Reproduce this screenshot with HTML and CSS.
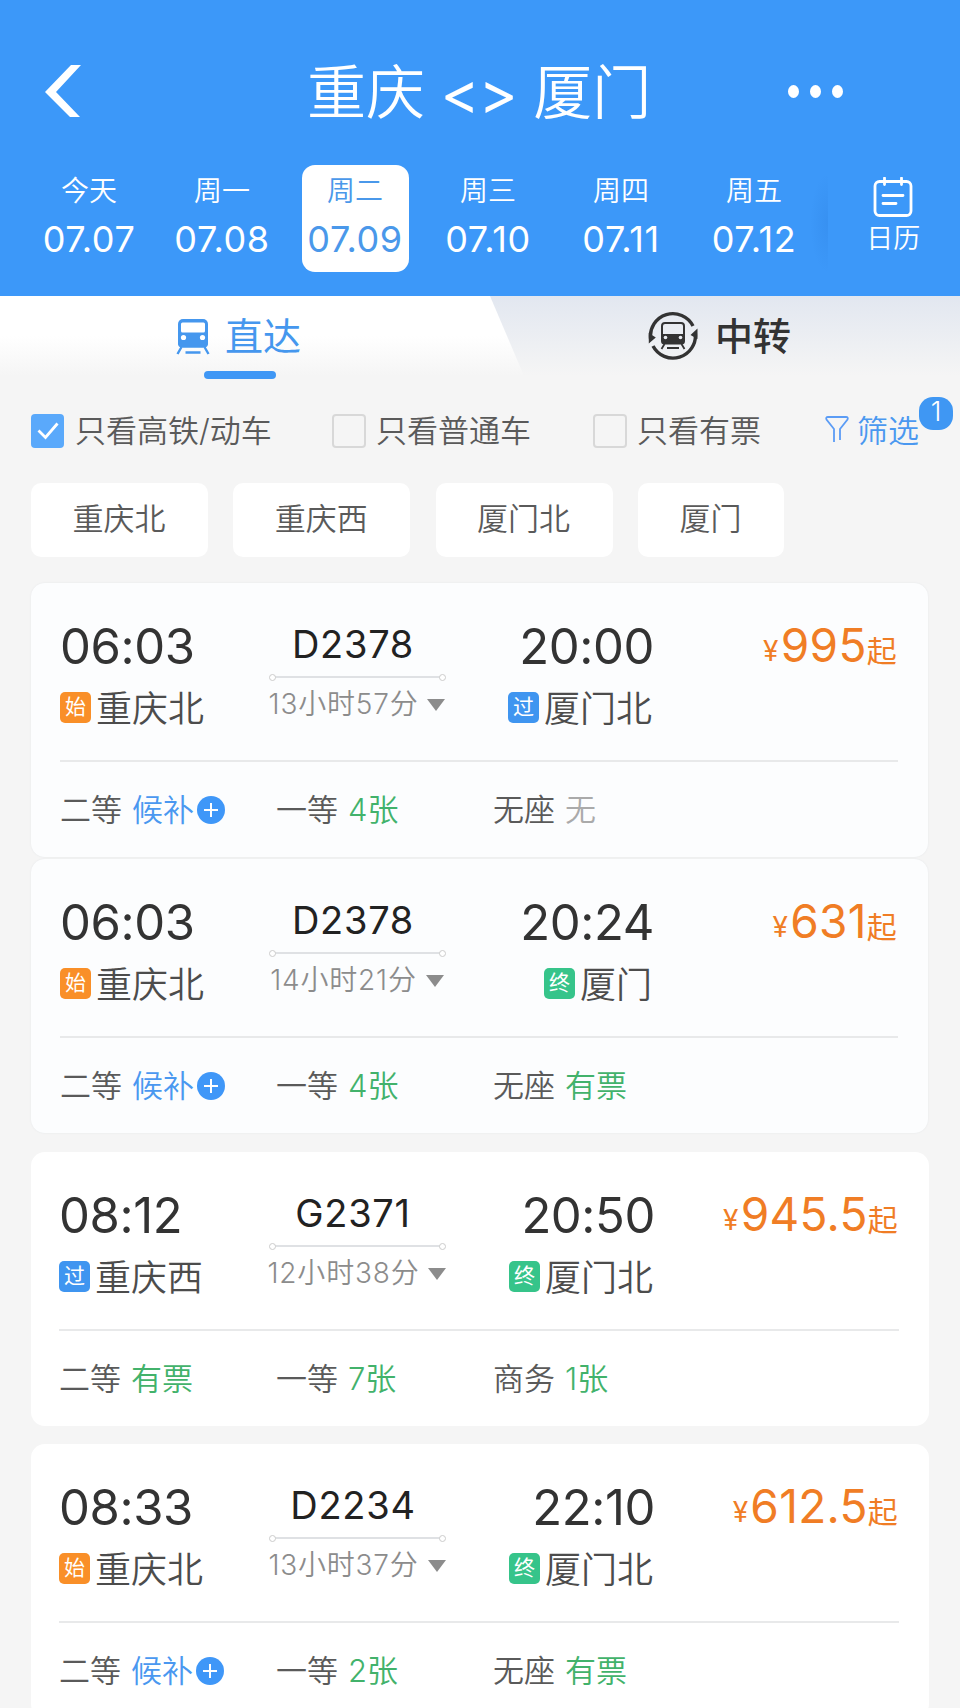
FILE: index.html
```html
<!DOCTYPE html>
<html lang="zh-CN">
<head>
  <meta charset="UTF-8">
  <meta name="viewport" content="width=device-width, initial-scale=1.0">
  <title>重庆 - 厦门</title>
  <link rel="stylesheet" href="styles.css">
</head>
<body>
  <header class="header">
    <div class="title-bar">
      <svg class="back" width="36" height="52" viewBox="0 0 36 52"><path d="M26 0h10L11 27l24 25H25L0 27z" fill="#fff"/></svg>
      <h1>重庆 <span class="arrows">&lt;&gt;</span> 厦门</h1>
      <div class="more"><i></i><i></i><i></i></div>
    </div>
    <nav class="dates">
      <div class="date"><span>今天</span><b>07.07</b></div>
      <div class="date"><span>周一</span><b>07.08</b></div>
      <div class="date active"><span>周二</span><b>07.09</b></div>
      <div class="date"><span>周三</span><b>07.10</b></div>
      <div class="date"><span>周四</span><b>07.11</b></div>
      <div class="date"><span>周五</span><b>07.12</b></div>
      <div class="calendar">
        <svg width="40" height="40" viewBox="0 0 40 40" fill="none" stroke="#fff" stroke-width="2.8" stroke-linecap="round">
          <rect x="2" y="4.500" width="36" height="34" rx="4.500"/>
          <path d="M11.500 1v6.500M28.500 1v6.500M10 18.500h20M10 26.500h13"/>
        </svg>
        <span>日历</span>
      </div>
    </nav>
  </header>

  <div class="tabs">
    <div class="tab tab-direct">
      <svg width="34" height="36" viewBox="0 0 34 36">
        <rect x="2" y="0" width="30" height="28.500" rx="5" fill="#4597ee"/>
        <path d="M2 12h30v12.500q0 4-4 4H6q-4 0-4-4z" fill="#4597ee"/>
        <rect x="5" y="3.500" width="24" height="10" rx="1.500" fill="#fff"/>
        <circle cx="7.500" cy="18.500" r="2.600" fill="#fff"/>
        <circle cx="26.500" cy="18.500" r="2.600" fill="#fff"/>
        <path d="M5.500 28l-4 7M28.500 28l4 7M9.500 33.500h15" stroke="#4597ee" stroke-width="2.400"/>
      </svg>
      <span>直达</span>
    </div>
    <div class="tab tab-transfer">
      <svg width="50" height="50" viewBox="0 0 50 50">
        <g fill="none" stroke="#333" stroke-width="3.400">
          <path d="M2.600 28A22.500 22.500 0 0 1 45 15"/>
          <path d="M47.300 22A22.500 22.500 0 0 1 5 35"/>
        </g>
        <path d="M.8 32.500V22l7 4.500zM49.500 17.500v10.500l-7-4z" fill="#333"/>
        <rect x="14" y="12" width="22" height="15" rx="3" fill="none" stroke="#333" stroke-width="2"/>
        <path d="M13 23h24v7q0 3.500-3.500 3.500h-17Q13 33.500 13 30z" fill="#333"/>
        <circle cx="17.500" cy="26.500" r="1.800" fill="#e9ecf1"/>
        <circle cx="32.500" cy="26.500" r="1.800" fill="#e9ecf1"/>
        <path d="M16.500 33l-3 5M33.500 33l3 5M19 37h12" stroke="#333" stroke-width="1.800"/>
      </svg>
      <span>中转</span>
    </div>
  </div>

  <div class="filters">
    <label class="check"><i class="box checked"><svg width="22" height="18" viewBox="0 0 22 18"><path d="M1.500 8.500l7 7L20.500 1.500" fill="none" stroke="#fff" stroke-width="2.800"/></svg></i><span>只看高铁/动车</span></label>
    <label class="check check-normal"><i class="box"></i><span>只看普通车</span></label>
    <label class="check check-ticket"><i class="box"></i><span>只看有票</span></label>
    <div class="filter">
      <svg width="24" height="27" viewBox="0 0 24 27" fill="none" stroke="#5b9cf5" stroke-width="1.800"><path d="M9 26V13L1.500 3.500Q.5 1 3 1h18q2.500 0 1.500 2.500L15 13v11"/></svg>
      <span>筛选</span>
      <em>1</em>
    </div>
  </div>

  <div class="stations">
    <span>重庆北</span>
    <span>重庆西</span>
    <span>厦门北</span>
    <span>厦门</span>
  </div>

  <main class="list">
    <section class="card group">
      <div class="trip">
        <div class="from"><time>06:03</time><p><i class="tag start">始</i><span>重庆北</span></p></div>
        <div class="train"><strong>D2378</strong><hr><p>13小时57分<i class="caret"></i></p></div>
        <div class="to"><time>20:00</time><p><i class="tag pass">过</i><span>厦门北</span></p></div>
        <div class="price"><small>¥</small>995<span>起</span></div>
      </div>
      <div class="seats">
        <div>二等 <span class="wait">候补</span><i class="plus"></i></div>
        <div>一等 <span class="ok">4张</span></div>
        <div>无座 <span class="none">无</span></div>
      </div>
    </section>

    <section class="card group">
      <div class="trip">
        <div class="from"><time>06:03</time><p><i class="tag start">始</i><span>重庆北</span></p></div>
        <div class="train"><strong>D2378</strong><hr><p>14小时21分<i class="caret"></i></p></div>
        <div class="to"><time>20:24</time><p><i class="tag end">终</i><span>厦门</span></p></div>
        <div class="price"><small>¥</small>631<span>起</span></div>
      </div>
      <div class="seats">
        <div>二等 <span class="wait">候补</span><i class="plus"></i></div>
        <div>一等 <span class="ok">4张</span></div>
        <div>无座 <span class="ok">有票</span></div>
      </div>
    </section>

    <section class="card">
      <div class="trip">
        <div class="from"><time>08:12</time><p><i class="tag pass">过</i><span>重庆西</span></p></div>
        <div class="train"><strong>G2371</strong><hr><p>12小时38分<i class="caret"></i></p></div>
        <div class="to"><time>20:50</time><p><i class="tag end">终</i><span>厦门北</span></p></div>
        <div class="price"><small>¥</small>945.5<span>起</span></div>
      </div>
      <div class="seats">
        <div>二等 <span class="ok">有票</span></div>
        <div>一等 <span class="ok">7张</span></div>
        <div>商务 <span class="ok">1张</span></div>
      </div>
    </section>

    <section class="card">
      <div class="trip">
        <div class="from"><time>08:33</time><p><i class="tag start">始</i><span>重庆北</span></p></div>
        <div class="train"><strong>D2234</strong><hr><p>13小时37分<i class="caret"></i></p></div>
        <div class="to"><time>22:10</time><p><i class="tag end">终</i><span>厦门北</span></p></div>
        <div class="price"><small>¥</small>612.5<span>起</span></div>
      </div>
      <div class="seats">
        <div>二等 <span class="wait">候补</span><i class="plus"></i></div>
        <div>一等 <span class="ok">2张</span></div>
        <div>无座 <span class="ok">有票</span></div>
      </div>
    </section>
  </main>
</body>
</html>
```
FILE: styles.css
```css
* {
  box-sizing: border-box;
}

body {
  margin: 0;
  height: 1708px;
  overflow: hidden;
  background: #f5f5f5;
  color: #5a5a5a;
  font-family: Inter, "Noto Sans CJK SC", sans-serif;
  font-weight: 350;
}

i, em {
  font-style: normal;
}

p, h1 {
  margin: 0;
}

svg {
  display: block;
  flex: none;
}

/* header */
.header {
  height: 296px;
  padding-top: 40px;
  background: #3c98f9;
  color: #fff;
}

.title-bar {
  display: flex;
  align-items: center;
  height: 102px;
  padding: 0 117px 0 45px;
}

.title-bar h1 {
  margin: 0 auto 0 226px;
  padding-top: 4px;
  font-size: 59px;
  line-height: 80px;
  font-weight: 350;
  white-space: nowrap;
}

.arrows {
  margin: 0 0 0 -1px;
  font-weight: 400;
  letter-spacing: -1px;
}

.more {
  display: flex;
  gap: 11px;
}

.more i {
  width: 11px;
  height: 13px;
  border-radius: 50%;
  background: #fff;
}

.dates {
  display: flex;
  padding: 23px 0 0 22.5px;
}

.date {
  display: flex;
  flex-direction: column;
  align-items: center;
  width: 107px;
  height: 107px;
  margin: 0 13px;
  padding-top: 9px;
  border-radius: 13px;
}

.date span {
  font-size: 28px;
  line-height: 34px;
}

.date b {
  margin-top: 12px;
  font-size: 36px;
  line-height: 39px;
  font-weight: 420;
  letter-spacing: 0.6px;
}

.date.active {
  background: #fff;
  color: #4a98ea;
}

.calendar {
  position: relative;
  display: flex;
  flex-direction: column;
  align-items: center;
  flex: 1;
  height: 107px;
  margin-left: 7px;
  padding: 12px 1px 0 0;
}

/* soft shade on the edge of the scrolling dates */
.calendar::before {
  content: "";
  position: absolute;
  left: -18px;
  top: 8px;
  width: 18px;
  height: 100px;
  background: radial-gradient(ellipse at right, rgba(30, 105, 200, 0.16), transparent 70%);
}

.calendar span {
  margin-top: 5px;
  font-size: 27px;
  line-height: 34px;
}

/* tabs */
.tabs {
  display: flex;
  height: 84px;
  background: linear-gradient(#e2e7f0, #f5f5f5 95%);
}

.tab {
  display: flex;
  align-items: center;
  height: 80px;
  font-size: 38px;
}

.tab span {
  margin-top: -6px;
}

.tab-direct {
  position: relative;
  width: 524px;
  padding-left: 176px;
  gap: 15px;
  background: linear-gradient(#fff 50%, #f5f5f5);
  clip-path: polygon(0 0, 490px 0, 524px 100%, 524px 84px, 0 84px);
  color: #4597ee;
  font-weight: 400;
}

.tab-direct svg {
  margin-top: 1px;
}

.tab-direct::after {
  content: "";
  position: absolute;
  left: 204px;
  top: 75px;
  width: 72px;
  height: 8px;
  border-radius: 4px;
  background: #3f97f5;
}

.tab-transfer {
  padding-left: 124px;
  gap: 17px;
  color: #333;
  font-weight: 500;
}

/* filters */
.filters {
  display: flex;
  align-items: center;
  height: 102px;
  padding: 0 0 0 31px;
  font-size: 31px;
}

.filters span {
  margin-top: -6px;
}

.check {
  display: flex;
  align-items: center;
  gap: 10px;
  width: 301px;
}

.check-normal {
  width: 261px;
}

.check-ticket {
  width: 232px;
}

.box {
  display: flex;
  align-items: center;
  justify-content: center;
  width: 34px;
  height: 34px;
  border: 2px solid #d8d8d8;
  border-radius: 4px;
}

.box.checked {
  width: 33px;
  margin-right: 1px;
  border: 0;
  background: #5aa9fb;
}

.filter {
  position: relative;
  display: flex;
  align-items: center;
  gap: 8px;
  color: #4a98f0;
}

.filter svg {
  margin-top: -3px;
}

.filter em {
  position: absolute;
  left: 94px;
  top: -15px;
  width: 34px;
  height: 33px;
  border-radius: 14px;
  background: #3f97f3;
  color: #fff;
  font-size: 27px;
  line-height: 30px;
  text-align: center;
}

/* station chips */
.stations {
  display: flex;
  gap: 25.3px;
  padding: 1px 31px 0;
}

.stations span {
  height: 74px;
  padding: 0 42.500px 0 41.500px;
  border-radius: 10px;
  background: #fff;
  font-size: 31px;
  line-height: 72px;
}

/* result cards */
.list {
  padding: 26px 31px 0;
}

.card {
  height: 274px;
  margin-bottom: 18px;
  padding: 0 30px 0 28px;
  border-radius: 14px;
  background: #fff;
}

.card.group {
  margin-right: 1px;
  padding-left: 29px;
  background: #fcfdfe;
  box-shadow: 0 0 2px #e4e6e8;
}

.card.group:first-child {
  margin-bottom: 2px;
}

.card.group + .card:not(.group) {
  margin-top: 19px;
}

.trip {
  display: flex;
  height: 179px;
  padding-top: 36px;
  border-bottom: 2px solid #e8e9ea;
}

.from, .train, .to {
  display: flex;
  flex-direction: column;
}

.from {
  width: 200px;
}

.group .from {
  width: 199px;
}

.train {
  align-items: center;
  width: 196px;
}

.to {
  align-items: flex-end;
  width: 198px;
}

.group .to {
  width: 197px;
}

time {
  color: #333;
  font-size: 49px;
  line-height: 56px;
  font-weight: 430;
  letter-spacing: -0.4px;
}

.to time {
  margin-right: -2px;
}

.from p, .to p {
  display: flex;
  align-items: center;
  gap: 5px;
  margin-top: 9px;
  font-size: 36px;
  line-height: 46px;
  color: #4c4c4c;
}

.from p span, .to p span {
  padding-top: 2px;
  margin-bottom: -2px;
}

.tag {
  width: 31px;
  height: 31px;
  border-radius: 5px;
  color: #fff;
  font-size: 21px;
  line-height: 29px;
  text-align: center;
  font-weight: 400;
}

.start {
  background: #f98f28;
}

.pass {
  background: #3f95f0;
}

.end {
  background: #36c48a;
}

.train strong {
  margin-right: 8px;
  color: #222;
  font-size: 38px;
  line-height: 51px;
  font-weight: 430;
  letter-spacing: 0.7px;
}

.train hr {
  position: relative;
  overflow: visible;
  width: 171px;
  height: 2px;
  margin: 6px 0 0;
  border: 0;
  background: #dfe1e4;
}

.train hr::before,
.train hr::after {
  content: "";
  position: absolute;
  top: -2px;
  left: -3px;
  width: 5px;
  height: 5px;
  border: 1px solid #ccc;
  border-radius: 50%;
  background: #fff;
}

.train hr::after {
  left: auto;
  right: -3px;
}

.train p {
  display: flex;
  align-items: center;
  gap: 9px;
  margin-top: 7px;
  color: #8c8c8c;
  font-size: 28px;
  line-height: 38px;
  letter-spacing: 0.8px;
  white-space: nowrap;
}

.caret {
  margin-top: 2px;
  border: 9px solid transparent;
  border-top: 12px solid #8c8c8c;
  border-bottom: 0;
}

.price {
  flex: 1;
  margin-top: -1px;
  color: #f07d25;
  font-size: 46px;
  line-height: 54px;
  font-weight: 430;
  letter-spacing: 0.3px;
  text-align: right;
  white-space: nowrap;
}

.price small {
  position: relative;
  top: -1px;
  margin-right: 2px;
  font-size: 28px;
}

.price span {
  margin: 0 1px 0 0;
  font-size: 30px;
}

.seats {
  display: grid;
  grid-template-columns: 217px 217px 1fr;
  height: 96px;
  align-items: center;
  font-size: 31px;
  line-height: 40px;
}

.group .seats {
  grid-template-columns: 216px 217px 1fr;
}

.seats div {
  display: flex;
  align-items: center;
  gap: 10px;
}

.wait {
  color: #4a98f0;
}

.ok {
  color: #42b26b;
}

.none {
  color: #aaa;
}

.plus {
  width: 28px;
  height: 28px;
  margin-left: -7px;
  border-radius: 50%;
  background:
    linear-gradient(#fff, #fff) center / 14px 2px no-repeat,
    linear-gradient(#fff, #fff) center / 2px 14px no-repeat,
    #3f97f8;
}
```
